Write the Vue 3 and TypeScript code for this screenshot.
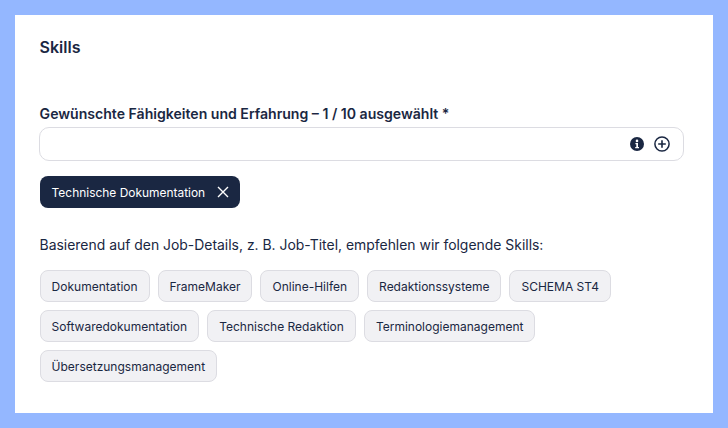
<script setup lang="ts">
const suggestions: string[] = [
  'Dokumentation', 'FrameMaker', 'Online-Hilfen', 'Redaktionssysteme', 'SCHEMA ST4',
  'Softwaredokumentation', 'Technische Redaktion', 'Terminologiemanagement', 'Übersetzungsmanagement',
]
</script>

<template>
  <div class="page">
    <section class="card">
      <h2 class="title">Skills</h2>
      <label class="label">Gewünschte Fähigkeiten und Erfahrung – 1 / 10 ausgewählt *</label>
      <div class="input">
        <svg class="info" width="14" height="14" viewBox="0 0 14 14">
          <circle cx="7" cy="7" r="7" fill="#1a2742" />
          <circle cx="7" cy="3.9" r="1.3" fill="#fff" />
          <path d="M5.4 6h2.6v4h1v1.2H5.2V10h1.1V7.2h-.9z" fill="#fff" />
        </svg>
        <svg class="plus" width="16" height="16" viewBox="0 0 16 16" fill="none" stroke="#1a2742">
          <circle cx="8" cy="8" r="7.1" stroke-width="1.5" />
          <path d="M8 4.2v7.6M4.2 8h7.6" stroke-width="1.6" />
        </svg>
      </div>
      <div class="selected">
        <span class="chip-dark">
          Technische Dokumentation
          <svg width="12" height="12" viewBox="0 0 12 12" fill="none" stroke="#fff" stroke-width="1.4">
            <path d="M1 1l10 10M11 1L1 11" />
          </svg>
        </span>
      </div>
      <p class="hint">Basierend auf den Job-Details, z. B. Job-Titel, empfehlen wir folgende Skills:</p>
      <div class="chips">
        <span v-for="s in suggestions" :key="s" class="chip">{{ s }}</span>
      </div>
    </section>
  </div>
</template>

<style>
html, body { margin: 0; background: #94b7ff; }
</style>

<style scoped>
.page {
  width: 728px;
  height: 428px;
  box-sizing: border-box;
  padding: 15px;
  background: #94b7ff;
  font-family: Inter, "Noto Sans", sans-serif;
  color: #1a2742;
}
.card {
  height: 398px;
  box-sizing: border-box;
  background: #fff;
  padding: 23px 29px 0 24.6px;
}
.title {
  margin: 0;
  font-size: 16px;
  line-height: 19px;
  font-weight: 600;
}
.label {
  display: block;
  margin-top: 48px;
  font-size: 14.08px;
  line-height: 17px;
  font-weight: 600;
}
.input {
  margin: 5px 0 0 -1px;
  height: 34px;
  box-sizing: border-box;
  border: 1px solid #dcdce2;
  border-radius: 10px;
  display: flex;
  align-items: center;
  justify-content: flex-end;
  gap: 10px;
  padding: 0 13px;
}
.selected {
  margin-top: 15px;
  display: flex;
}
.chip-dark {
  height: 32px;
  box-sizing: border-box;
  background: #1a2742;
  color: #fff;
  border-radius: 8px;
  padding: 0 11px 0 12px;
  display: flex;
  align-items: center;
  gap: 12px;
  font-size: 11.95px;
}
.hint {
  margin: 29px 0 0;
  font-size: 13.93px;
  line-height: 17px;
}
.chips {
  margin-top: 16px;
  display: flex;
  flex-wrap: wrap;
  gap: 8px;
}
.chip {
  height: 32px;
  box-sizing: border-box;
  background: #f1f1f4;
  border: 1px solid #dcdce2;
  border-radius: 8px;
  padding: 0 11px;
  display: flex;
  align-items: center;
  font-size: 12px;
}
</style>
